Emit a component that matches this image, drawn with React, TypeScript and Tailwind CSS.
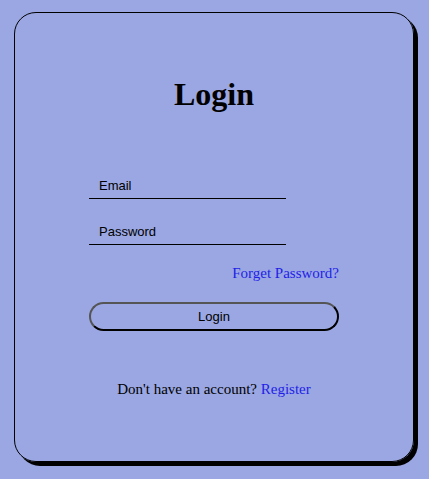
export default function App() {
  return (
    <div className="min-h-[479px] w-full bg-[#9aa7e3] pt-3 pl-[14px]">
      <div className="flex h-[450px] w-[400px] flex-col items-center rounded-[22px] border border-black shadow-[4px_4px_0_0_#000]">
        <h1 className="mt-[63px] font-['Liberation_Serif',serif] text-[32px] leading-[37px] font-bold text-black">
          Login
        </h1>
        <form className="mt-[62px] flex w-[250px] flex-col">
          <input
            type="email"
            placeholder="Email"
            className="h-6 w-[197px] border-b border-black bg-transparent px-[10px] pb-[2px] font-['Liberation_Sans',sans-serif] text-[13px] text-black outline-none placeholder:text-black"
          />
          <input
            type="password"
            placeholder="Password"
            className="mt-[22px] h-6 w-[197px] border-b border-black bg-transparent px-[10px] pb-[2px] font-['Liberation_Sans',sans-serif] text-[13px] text-black outline-none placeholder:text-black"
          />
          <a
            href="#"
            className="mt-[20px] self-end font-['Liberation_Serif',serif] text-[15px] leading-[17px] text-[#1f1fe6]"
          >
            Forget Password?
          </a>
          <button
            type="button"
            className="mt-[20px] h-[29px] w-[250px] rounded-full border-2 border-[#555] border-r-black border-b-black bg-transparent font-['Liberation_Sans',sans-serif] text-[13px] text-black"
          >
            Login
          </button>
        </form>
        <p className="mt-[50px] font-['Liberation_Serif',serif] text-[15px] leading-[17px] text-black">
          Don't have an account? <a href="#" className="text-[#1f1fe6]">Register</a>
        </p>
      </div>
    </div>
  );
}
